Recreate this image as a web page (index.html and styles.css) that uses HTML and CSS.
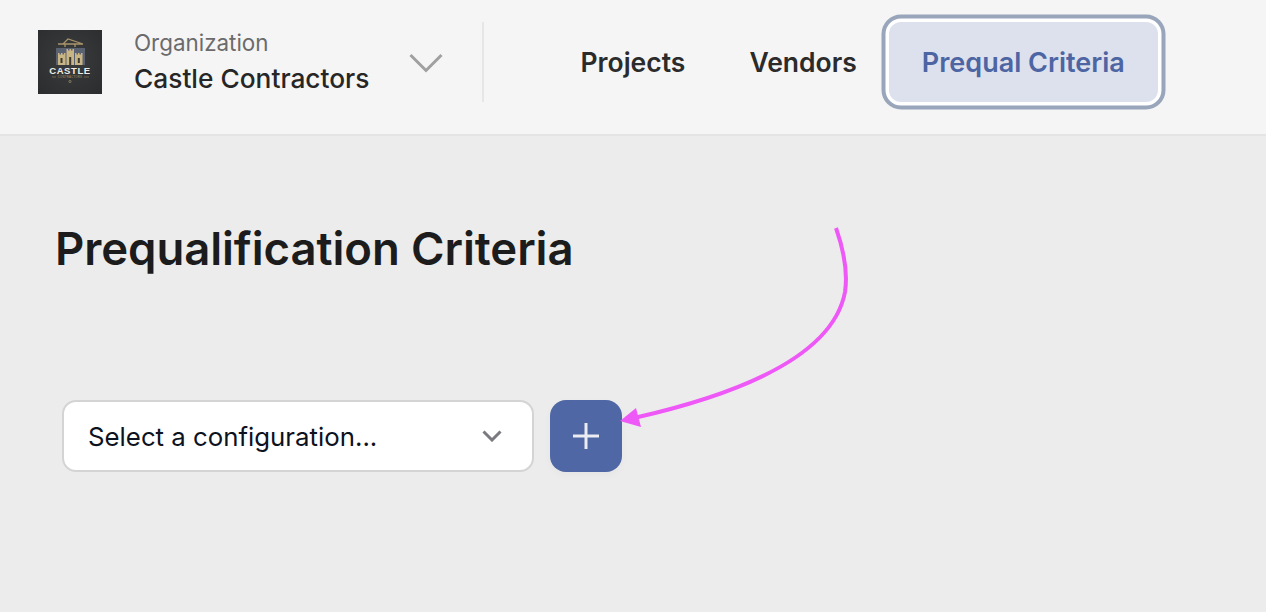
FILE: index.html
```html
<!DOCTYPE html>
<html lang="en">
<head>
<meta charset="utf-8">
<title>Prequalification Criteria</title>
<link rel="stylesheet" href="styles.css">
</head>
<body>
<header class="topbar">
  <svg class="logo" viewBox="0 0 64 64" aria-label="Castle Contractors logo">
    <defs>
      <radialGradient id="logoBg" cx="50%" cy="45%" r="70%">
        <stop offset="0" stop-color="#3a3c3e"/>
        <stop offset="1" stop-color="#2b2d2e"/>
      </radialGradient>
    </defs>
    <rect width="64" height="64" fill="url(#logoBg)"/>
    <path d="M20 14h25M25 14l5-5 15 5M27 14v3M37 14v3" stroke="#a8956a" stroke-width="1.300" fill="none"/>
    <rect x="18" y="18" width="29" height="17" fill="#5a6272"/>
    <path d="M20 23h1.500v1.500H23V23h1.500v1.500H26V23h1.500v12H20zM28.500 19H30v1.500h1.500V19H33v1.500h1.500V19H36v16h-7.500zM37 23h1.500v1.500H40V23h1.500v1.500H43V23h1.500v12H37z" fill="#c9b483"/>
    <path d="M22.500 28h2v5h-2zM31.200 27h2v8h-2zM39.800 28h2v5h-2z" fill="#3b3932"/>
    <text class="logo-main" x="32" y="44">CASTLE</text>
    <path d="M14 47h4M46 47h5" stroke="#8c7c58" stroke-width=".7"/>
    <text class="logo-sub" x="32" y="48">CONTRACTORS</text>
    <circle cx="32" cy="51.500" r="1.100" fill="none" stroke="#a8956a" stroke-width=".7"/>
  </svg>
  <div class="org">
    <span class="org-label">Organization</span>
    <span class="org-name">Castle Contractors</span>
  </div>
  <svg class="org-chevron" viewBox="0 0 34 20"><path d="M1.500 2 17 17.500 32.500 2"/></svg>
  <div class="divider"></div>
  <nav class="nav">
    <a class="nav-item">Projects</a>
    <a class="nav-item">Vendors</a>
    <a class="nav-item is-active">Prequal Criteria</a>
  </nav>
</header>
<main class="content">
  <h1 class="title">Prequalification Criteria</h1>
  <div class="controls">
    <div class="select">
      <span>Select a configuration...</span>
      <svg class="select-chevron" viewBox="0 0 20 12"><path d="M1.500 1.500 10 10l8.500-8.500"/></svg>
    </div>
    <button class="add" aria-label="Add configuration">
      <svg viewBox="0 0 28 28"><path d="M14 1v26M1 14h26"/></svg>
    </button>
  </div>
</main>
<svg class="annotation" viewBox="0 0 1266 612" aria-hidden="true">
  <path class="annotation-line" d="M836 228C843 248 848 272 845 292C836 340 780 385 634 418"/>
  <path class="annotation-head" d="M620 421 636 408 641 427z"/>
</svg>
</body>
</html>
```

FILE: styles.css
```css
* { box-sizing: border-box; }
html, body { height: 100%; }
body {
  margin: 0;
  background: #ececec;
  color: #1c1c1c;
  font-family: Inter, "Liberation Sans", sans-serif;
  overflow: hidden;
  position: relative;
}
.topbar {
  height: 136px;
  background: #f5f5f5;
  border-bottom: 2px solid #e4e4e4;
  display: flex;
  align-items: center;
  padding-left: 38px;
}
.logo { width: 64px; height: 64px; flex: none; margin-top: -10px; }
.logo-main { font: 700 9.500px "Liberation Sans", sans-serif; fill: #f0eee8; text-anchor: middle; letter-spacing: .6px; }
.logo-sub { font: 400 2.800px "Liberation Sans", sans-serif; fill: #a8956a; text-anchor: middle; letter-spacing: .25px; }
.org { display: flex; flex-direction: column; gap: 2px; margin-left: 32px; margin-top: -10px; width: 275px; }
.org-label { font-size: 22.400px; line-height: 31px; color: #6b6b6b; }
.org-name { font-size: 26.300px; line-height: 38px; font-weight: 500; color: #262626; }
.org-chevron { width: 34px; height: 20px; flex: none; margin-top: -9px; fill: none; stroke: #a0a0a0; stroke-width: 3; }
.divider { width: 2px; height: 80px; background: #e6e6e6; margin-left: 39px; margin-top: -10px; flex: none; }
.nav { display: flex; align-items: center; margin-left: 64.500px; margin-top: -10px; }
.nav-item {
  height: 80px;
  padding: 0 32px;
  display: flex;
  align-items: center;
  font-size: 26.500px;
  font-weight: 600;
  color: #2b2b2b;
  border-radius: 12px;
}
.nav-item.is-active {
  font-size: 27px;
  padding: 0 33px;
  background: #dce1ed;
  color: #4d65a2;
  box-shadow: 0 0 0 3.500px #fff, 0 0 0 7.500px #98a5bb;
}
.content { padding: 0 55px; }
.title { margin: 78px 0 0; font-size: 45.500px; line-height: 70px; font-weight: 600; letter-spacing: -.08px; color: #1c1c1c; }
.controls { display: flex; gap: 16px; margin: 116px 0 0 7px; }
.select {
  width: 472px;
  height: 72px;
  background: #fff;
  border: 2px solid #d4d4d4;
  border-radius: 14px;
  padding: 0 30px 0 24px;
  display: flex;
  align-items: center;
  justify-content: space-between;
  font-size: 25.800px;
  color: #0d1220;
}
.select-chevron { width: 20px; height: 12px; fill: none; stroke: #7a7a80; stroke-width: 3; }
.add {
  width: 72px;
  height: 72px;
  padding: 0;
  border: 0;
  border-radius: 16px;
  background: #4f67a4;
  box-shadow: 0 3px 8px rgba(0,0,0,.03);
  display: flex;
  align-items: center;
  justify-content: center;
}
.add svg { width: 28px; height: 28px; fill: none; stroke: #ececf2; stroke-width: 3; }
.annotation { position: absolute; inset: 0; width: 1266px; height: 612px; pointer-events: none; }
.annotation-line { fill: none; stroke: #ee58f7; stroke-width: 4; }
.annotation-head { fill: #ee58f7; }
```
